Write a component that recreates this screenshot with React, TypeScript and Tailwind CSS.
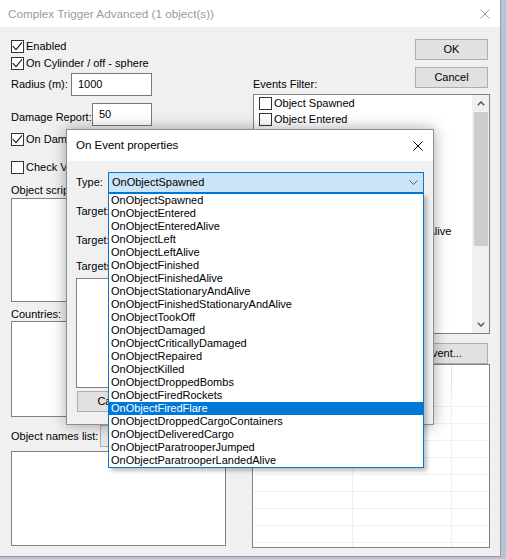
import React from "react";

const eventTypes = [
  "OnObjectSpawned",
  "OnObjectEntered",
  "OnObjectEnteredAlive",
  "OnObjectLeft",
  "OnObjectLeftAlive",
  "OnObjectFinished",
  "OnObjectFinishedAlive",
  "OnObjectStationaryAndAlive",
  "OnObjectFinishedStationaryAndAlive",
  "OnObjectTookOff",
  "OnObjectDamaged",
  "OnObjectCriticallyDamaged",
  "OnObjectRepaired",
  "OnObjectKilled",
  "OnObjectDroppedBombs",
  "OnObjectFiredRockets",
  "OnObjectFiredFlare",
  "OnObjectDroppedCargoContainers",
  "OnObjectDeliveredCargo",
  "OnObjectParatrooperJumped",
  "OnObjectParatrooperLandedAlive",
];

const filterEvents = [
  "Object Spawned",
  "Object Entered",
  "Object Entered Alive",
  "Object Left",
  "Object Left Alive",
  "Object Finished",
  "Object Finished Alive",
  "Object Stationary And Alive",
  "Object Finished Stationary And Alive",
  "Object Took Off",
  "Object Damaged",
  "Object Critically Damaged",
  "Object Repaired",
  "Object Killed",
  "Object Dropped Bombs",
];

function Tick() {
  return (
    <svg width="11" height="11" viewBox="0 0 11 11" className="block">
      <polyline points="0.8,5.2 4,8.6 10,1.4" fill="none" stroke="#1a1a1a" strokeWidth="1.1" />
    </svg>
  );
}

function CheckBox({ checked = false }: { checked?: boolean }) {
  return (
    <span className="w-[13px] h-[13px] shrink-0 border border-[#333333] bg-white flex items-center justify-center">
      {checked && <Tick />}
    </span>
  );
}

function CheckRow({ label, checked }: { label: string; checked?: boolean }) {
  return (
    <div className="h-[17px] flex items-center gap-[2px] whitespace-nowrap">
      <CheckBox checked={checked} />
      <span>{label}</span>
    </div>
  );
}

function CloseX({ color }: { color: string }) {
  return (
    <svg width="10" height="10" viewBox="0 0 10 10" className="block">
      <path d="M0.5 0.5 L9.5 9.5 M9.5 0.5 L0.5 9.5" stroke={color} strokeWidth="1" fill="none" />
    </svg>
  );
}

function ThinChevron() {
  return (
    <svg width="9" height="5" viewBox="0 0 9 5" className="block">
      <polyline points="0.5,0.5 4.5,4.5 8.5,0.5" fill="none" stroke="#606060" strokeWidth="1" />
    </svg>
  );
}

function ScrollArrow({ up }: { up?: boolean }) {
  return (
    <svg width="8" height="5" viewBox="0 0 8 5" className="block">
      <polyline
        points={up ? "0.8,4.3 4,1 7.2,4.3" : "0.8,0.7 4,4 7.2,0.7"}
        fill="none"
        stroke="#606060"
        strokeWidth="1.6"
      />
    </svg>
  );
}

function Button({ label, className = "" }: { label: string; className?: string }) {
  return (
    <div
      className={
        "h-[21px] border border-[#adadad] bg-[#e1e1e1] flex items-center justify-center whitespace-nowrap " +
        className
      }
    >
      {label}
    </div>
  );
}

function TextBox({ value, className = "" }: { value?: string; className?: string }) {
  return (
    <div className={"h-[23px] border border-[#7a7a7a] bg-white flex items-center pl-[6px] " + className}>
      {value}
    </div>
  );
}

export default function App() {
  const selected = "OnObjectFiredFlare";
  return (
    <div className="w-[506px] h-[559px] relative overflow-hidden bg-[#b2c6da] text-black text-[11px] font-['Liberation_Sans','Segoe_UI',Arial,sans-serif]">
      {/* main trigger window */}
      <div className="w-[501px] h-[557px] bg-[#f0f0f0] border-r border-b border-[#9a9a9a] flex flex-col">
        <div className="h-[27px] shrink-0 bg-white flex items-center justify-between pl-[8px] pr-[10px] text-[#9b9b9b] text-[11.7px]">
          <span>Complex Trigger Advanced (1 object(s))</span>
          <CloseX color="#a0a0a0" />
        </div>

        <div className="flex-1 flex">
          {/* left column */}
          <div className="w-[241px] shrink-0 pl-[11px] pt-[11px] flex flex-col">
            <CheckRow label="Enabled" checked />
            <CheckRow label="On Cylinder / off - sphere" checked />
            <div className="mt-[1px] flex items-center h-[23px]">
              <span className="w-[60px] shrink-0 whitespace-nowrap">Radius (m):</span>
              <TextBox value="1000" className="w-[81px]" />
            </div>
            <div className="mt-[7px] flex items-center h-[23px]">
              <span className="w-[81px] shrink-0 pt-[5px] whitespace-nowrap">Damage Report:</span>
              <TextBox value="50" className="w-[60px]" />
            </div>
            <div className="mt-[5px]">
              <CheckRow label="On Damage report position" checked />
            </div>
            <div className="mt-[11px]">
              <CheckRow label="Check Vehicles only" />
            </div>
            <div className="mt-[7px] h-[15px] leading-[15px] whitespace-nowrap">Object scripts:</div>
            <div className="w-[215px] h-[104px] border border-[#828282] bg-white" />
            <div className="mt-[5px] h-[14px] leading-[14px]">Countries:</div>
            <div className="w-[215px] h-[96px] border border-[#828282] bg-white" />
            <div className="mt-[8px] flex items-center h-[22px]">
              <span className="w-[89px] shrink-0 whitespace-nowrap">Object names list:</span>
              <div className="w-[126px] h-[22px] border border-[#adadad] bg-[#e5e5e5]" />
            </div>
            <div className="mt-[4px] w-[215px] h-[95px] border border-[#828282] bg-white" />
          </div>

          {/* right column */}
          <div className="flex-1 flex flex-col pl-[12px] pt-[12px]">
            <div className="self-end mr-[12px] flex flex-col gap-[7px]">
              <Button label="OK" className="w-[73px]" />
              <Button label="Cancel" className="w-[73px]" />
            </div>
            <div className="-mt-[11px] h-[14px] leading-[14px]">Events Filter:</div>
            <div className="mt-[3px] w-[237px] h-[240px] border border-[#828282] bg-white flex overflow-hidden">
              <div className="flex-1 overflow-hidden pl-[5px]">
                {filterEvents.map((e) => (
                  <div key={e} className="h-[16px] flex items-center gap-[2px] whitespace-nowrap">
                    <CheckBox />
                    <span>{e}</span>
                  </div>
                ))}
              </div>
              <div className="w-[17px] shrink-0 bg-[#f0f0f0] flex flex-col items-center">
                <div className="h-[17px] flex items-center justify-center">
                  <ScrollArrow up />
                </div>
                <div className="w-[14px] h-[134px] bg-[#cdcdcd]" />
                <div className="flex-1" />
                <div className="h-[17px] flex items-center justify-center">
                  <ScrollArrow />
                </div>
              </div>
            </div>
            <div className="mt-[9px] flex justify-end mr-[12px]">
              <Button label="Add Event..." className="w-[112px]" />
            </div>
            <div className="w-[238px] -ml-[1px] h-[184px] border border-[#828282] bg-white overflow-hidden flex flex-col">
              <div className="h-[25px] shrink-0 flex">
                <div className="w-[100px] border-r border-[#e5e5e5]" />
                <div className="w-[99px] border-r border-[#e5e5e5]" />
                <div className="flex-1" />
              </div>
              {Array.from({ length: 10 }).map((_, i) => (
                <div key={i} className="h-[17px] shrink-0 flex border-b border-[#f0f0f0]">
                  <div className="w-[100px] border-r border-[#f0f0f0]" />
                  <div className="w-[99px] border-r border-[#f0f0f0]" />
                  <div className="flex-1" />
                </div>
              ))}
            </div>
          </div>
        </div>
      </div>

      {/* event properties dialog */}
      <div className="absolute left-[66px] top-[129px] w-[368px] h-[296px] border border-[#8f8f8f] bg-[#f0f0f0] shadow-[0_0_14px_rgba(0,0,0,0.35)] flex flex-col">
        <div className="h-[31px] shrink-0 bg-white flex items-center justify-between pl-[9px] pr-[10px] text-[11.5px]">
          <span>On Event properties</span>
          <CloseX color="#000000" />
        </div>
        <div className="flex flex-col px-[9px] pt-[11px]">
          <div className="flex items-center h-[21px]">
            <span className="w-[32px] shrink-0">Type:</span>
            <div className="flex-1 h-[21px] border border-[#0078d7] bg-[#cce4f7] flex items-center justify-between pl-[3px] pr-[5px]">
              <span>OnObjectSpawned</span>
              <ThinChevron />
            </div>
          </div>
          <div className="mt-[8px] flex items-center h-[21px]">
            <span className="whitespace-nowrap">Target:</span>
          </div>
          <div className="mt-[8px] flex items-center h-[21px]">
            <span className="whitespace-nowrap">Target:</span>
          </div>
          <div className="mt-[5px] flex items-center h-[21px]">
            <span className="whitespace-nowrap">Targets:</span>
          </div>
          <div className="mt-[1px] h-[110px] border border-[#828282] bg-white" />
          <div className="mt-[3px] flex pl-[1px]">
            <Button label="Cancel" className="w-[75px]" />
          </div>
        </div>
      </div>

      {/* open type list */}
      <div className="absolute left-[108px] top-[193px] w-[316px] border border-[#0078d7] bg-white shadow-[3px_3px_4px_rgba(0,0,0,0.25)]">
        {eventTypes.map((t) => (
          <div
            key={t}
            className={
              "h-[13px] leading-[13px] pl-[2px] whitespace-nowrap " +
              (t === selected ? "bg-[#0078d7] text-white" : "")
            }
          >
            {t}
          </div>
        ))}
      </div>
    </div>
  );
}
